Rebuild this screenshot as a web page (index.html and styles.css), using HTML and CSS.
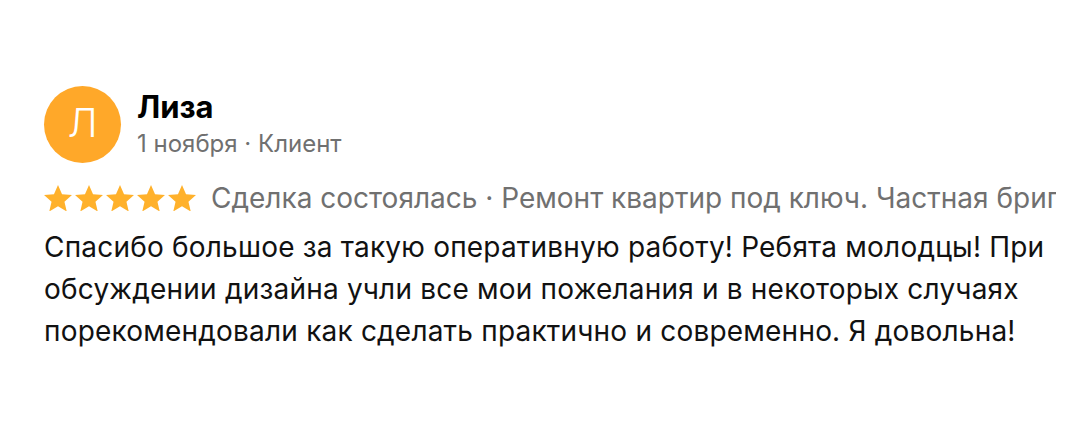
FILE: index.html
```html
<!DOCTYPE html>
<html lang="ru">
<head>
<meta charset="utf-8">
<link rel="stylesheet" href="styles.css">
</head>
<body>
<div class="review">
  <div class="head">
    <div class="avatar">Л</div>
    <div class="who">
      <div class="name">Лиза</div>
      <div class="meta">1 ноября · Клиент</div>
    </div>
  </div>
  <div class="rating">
    <div class="stars">
      <svg viewBox="1.6 1.8 20.8 19.7" class="star"><path d="M12 1.8l3 6.9 7.4.6-5.6 4.9 1.7 7.3L12 17.6l-6.5 3.9 1.7-7.3L1.6 9.3 9 8.7z"/></svg>
      <svg viewBox="1.6 1.8 20.8 19.7" class="star"><path d="M12 1.8l3 6.9 7.4.6-5.6 4.9 1.7 7.3L12 17.6l-6.5 3.9 1.7-7.3L1.6 9.3 9 8.7z"/></svg>
      <svg viewBox="1.6 1.8 20.8 19.7" class="star"><path d="M12 1.8l3 6.9 7.4.6-5.6 4.9 1.7 7.3L12 17.6l-6.5 3.9 1.7-7.3L1.6 9.3 9 8.7z"/></svg>
      <svg viewBox="1.6 1.8 20.8 19.7" class="star"><path d="M12 1.8l3 6.9 7.4.6-5.6 4.9 1.7 7.3L12 17.6l-6.5 3.9 1.7-7.3L1.6 9.3 9 8.7z"/></svg>
      <svg viewBox="1.6 1.8 20.8 19.7" class="star"><path d="M12 1.8l3 6.9 7.4.6-5.6 4.9 1.7 7.3L12 17.6l-6.5 3.9 1.7-7.3L1.6 9.3 9 8.7z"/></svg>
    </div>
    <div class="deal">Сделка состоялась · Ремонт квартир под ключ. Частная бригада</div>
  </div>
  <p class="text">Спасибо большое за такую оперативную работу! Ребята молодцы! При обсуждении дизайна учли все мои пожелания и в некоторых случаях порекомендовали как сделать практично и современно. Я довольна!</p>
</div>
</body>
</html>
```
FILE: styles.css
```css
html, body {
  margin: 0;
  padding: 0;
  background: #fff;
}
body {
  font-family: Inter, "Noto Sans", sans-serif;
  color: #000;
}
.review {
  padding: 86px 20px 0 44px;
  width: 1012px;
}
.head {
  display: flex;
  align-items: center;
  gap: 16px;
}
.avatar {
  width: 77px;
  height: 77px;
  border-radius: 50%;
  background: #ffa829;
  color: #fff;
  font-size: 40px;
  font-weight: 300;
  display: flex;
  align-items: center;
  justify-content: center;
  flex: none;
  padding-bottom: 4px;
  box-sizing: border-box;
}
.who {
  display: flex;
  flex-direction: column;
  gap: 4px;
  padding-bottom: 2px;
}
.name {
  font-size: 31px;
  font-weight: 700;
  line-height: 36px;
}
.meta {
  font-size: 24px;
  color: #707070;
  line-height: 30px;
}
.rating {
  display: flex;
  align-items: center;
  gap: 15px;
  margin-top: 19px;
  height: 32px;
}
.stars {
  display: flex;
  gap: 3px;
  flex: none;
}
.star {
  width: 28px;
  height: 26.5px;
  fill: #ffb12b;
}
.deal {
  font-size: 28px;
  color: #707070;
  white-space: nowrap;
  overflow: hidden;
  flex: 1;
  min-width: 0;
}
.text {
  margin: 12px 0 0;
  font-size: 28px;
  letter-spacing: 0.2px;
  line-height: 42px;
  color: #111;
}
```
